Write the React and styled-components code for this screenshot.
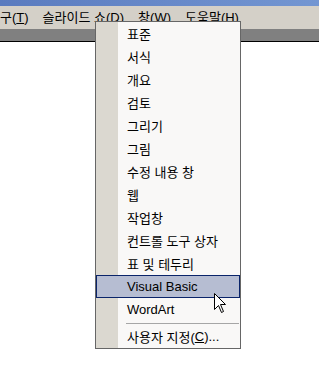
import styled, { createGlobalStyle } from "styled-components";

const GlobalStyle = createGlobalStyle`
  html, body {
    margin: 0;
    padding: 0;
    background: #ffffff;
  }
  body {
    font-family: "Liberation Sans", "Noto Sans CJK KR", sans-serif;
    font-size: 13px;
    color: #000;
    overflow: hidden;
  }
`;

const Screen = styled.div`
  position: relative;
  width: 319px;
  height: 384px;
  overflow: hidden;
  background: #ffffff;
`;

const TitleStrip = styled.div`
  height: 6px;
  background: linear-gradient(to right, #5a7bbf, #7396d2);
`;

const MenuBar = styled.div`
  height: 23px;
  background: #d4d0c8;
  display: flex;
  align-items: center;
  gap: 14px;
  overflow: hidden;
  white-space: nowrap;
`;

const BarItem = styled.span`
  line-height: 15px;
  margin-top: -1px;
`;

const GrayBand = styled.div`
  height: 12px;
  background: #808080;
  border-bottom: 1px solid #000;
`;

const Popup = styled.div`
  position: absolute;
  left: 95px;
  top: 21px;
  width: 144px;
  border: 1px solid #666666;
  background: linear-gradient(to right, #dbd8d0 22px, #f9f8f7 22px);
  display: flex;
  flex-direction: column;
`;

const Item = styled.div`
  height: 23px;
  box-sizing: border-box;
  display: flex;
  align-items: center;
  padding-left: 31px;
  white-space: nowrap;
  ${(p) =>
    p.$active &&
    `
    background: #b6bdd2;
    border: 1px solid #0a246a;
    padding-left: 30px;
  `}
`;

const Separator = styled.div`
  height: 4px;
  display: flex;
  align-items: center;
  padding-left: 30px;
  padding-right: 1px;
  &::after {
    content: "";
    flex: 1;
    height: 1px;
    background: #a6a6a6;
  }
`;

const Cursor = styled.svg`
  position: absolute;
  left: 214px;
  top: 293px;
`;

const items = [
  "표준",
  "서식",
  "개요",
  "검토",
  "그리기",
  "그림",
  "수정 내용 창",
  "웹",
  "작업창",
  "컨트롤 도구 상자",
  "표 및 테두리",
  "Visual Basic",
  "WordArt",
];

export default function App() {
  return (
    <Screen>
      <GlobalStyle />
      <TitleStrip />
      <MenuBar>
        <BarItem>
          구(<u>T</u>)
        </BarItem>
        <BarItem>
          슬라이드 쇼(<u>D</u>)
        </BarItem>
        <BarItem>
          창(<u>W</u>)
        </BarItem>
        <BarItem>
          도움말(<u>H</u>)
        </BarItem>
      </MenuBar>
      <GrayBand />
      <Popup>
        {items.map((label) => (
          <Item key={label} $active={label === "Visual Basic"}>
            {label}
          </Item>
        ))}
        <Separator />
        <Item>
          사용자 지정(<u>C</u>)...
        </Item>
      </Popup>
      <Cursor width="13" height="21" viewBox="0 0 13 21">
        <path
          d="M0.5 0.5 L0.5 16.5 L4.5 12.5 L7.5 19.5 L9.5 18.5 L6.5 11.5 L11.5 11.5 Z"
          fill="#ffffff"
          stroke="#000000"
          strokeWidth="1"
        />
      </Cursor>
    </Screen>
  );
}
